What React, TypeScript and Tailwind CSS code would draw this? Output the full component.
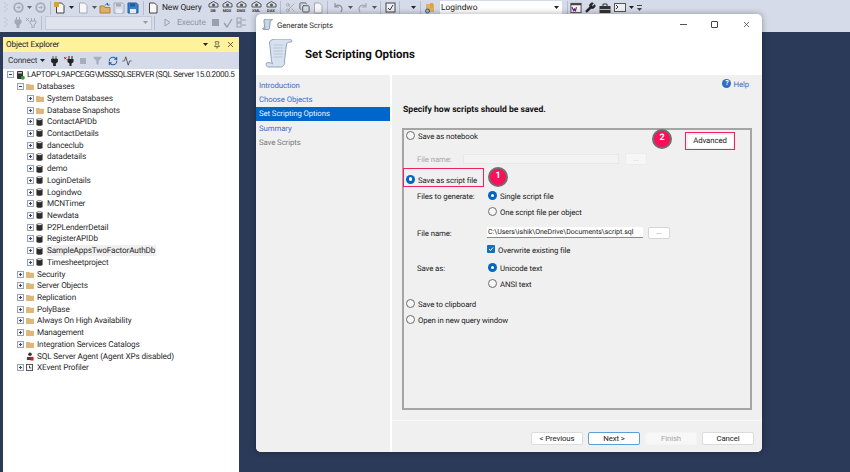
import type { ReactNode } from 'react'
import { Activity, Copy, Filter, Pin, RefreshCw, Scissors, Wrench, X } from 'lucide-react'

const FONT = "font-['Roboto',sans-serif] [text-rendering:geometricPrecision]"
const LABEL = 'text-[7.800px] tracking-[-0.1px]'

function Sep() {
  return <div className="mx-[2px] h-[14px] w-px shrink-0 bg-[#b4bccf]" />
}

function Grip() {
  return (
    <div className="flex h-[15px] w-[12px] shrink-0 items-center justify-center">
      <svg width="4" height="11" viewBox="0 0 4 11"><path d="M0.500 1h1M2.500 3h1M0.500 5h1M2.500 7h1M0.500 9h1" stroke="#aab1c2" strokeWidth="1.200" /></svg>
    </div>
  )
}

function Caret({ color = '#222' }: { color?: string }) {
  return (
    <svg width="5" height="3" viewBox="0 0 5 3" className="shrink-0">
      <path d="M0 0h5L2.500 3z" fill={color} />
    </svg>
  )
}

function Slot({ w, children }: { w: number; children?: ReactNode }) {
  return <div className="flex shrink-0 items-center justify-center" style={{ width: w }}>{children}</div>
}

function Circ({ color = '#a5abb8' }: { color?: string }) {
  return (
    <svg width="11" height="11" viewBox="0 0 11 11">
      <circle cx="5.500" cy="5.500" r="4.300" fill="none" stroke={color} strokeWidth="1.800" />
      <path d="M3.500 5.500h3.500M5.500 3.800 7.200 5.500 5.500 7.200" fill="none" stroke={color} strokeWidth="1" />
    </svg>
  )
}

function DocIcon({ color = '#444', accent }: { color?: string; accent?: string }) {
  return (
    <svg width="12" height="12" viewBox="0 0 12 12">
      <path d="M2.500 1h5l2.500 2.500V11h-7.500z" fill="#f7f7f7" stroke={color} />
      {accent && <rect x="0" y="0" width="5" height="5" fill={accent} />}
    </svg>
  )
}

function SaveIcon({ color = '#a3a9b5', fill = 'none' }: { color?: string; fill?: string }) {
  return (
    <svg width="12" height="12" viewBox="0 0 12 12">
      <path d="M1 1h8.500L11 2.500V11H1z" fill={fill} stroke={color} />
      <rect x="3" y="1.500" width="5" height="3" fill={color} />
      <rect x="3" y="7" width="6" height="4" fill="#e8ebf2" />
    </svg>
  )
}

function DbGear({ label }: { label: string }) {
  return (
    <div className="flex h-[13px] w-[13px] flex-col items-center">
      <svg width="11" height="7" viewBox="0 0 11 7" className="shrink-0">
        <path d="M1 6V3l4.500-2.500L10 3v3z" fill="none" stroke="#555" strokeWidth="1" />
        <circle cx="5.500" cy="4" r="1.500" fill="#555" />
      </svg>
      <span className="text-[4px] font-bold leading-[5px] text-[#333]">{label}</span>
    </div>
  )
}

function TopToolbar() {
  return (
    <div className={`h-[32px] shrink-0 bg-[#d6dbe9] ${FONT}`}>
      <div className="flex h-[15px] items-center">
        <Grip />
        <Slot w={12}><Circ /></Slot>
        <Slot w={10}><Caret color="#666" /></Slot>
        <Slot w={12}><Circ /></Slot>
        <Slot w={2} />
        <Sep />
        <Slot w={14}><DocIcon accent="#d9a13b" /></Slot>
        <Slot w={8}><Caret /></Slot>
        <Slot w={16}><DocIcon color="#a3a9b5" /></Slot>
        <Slot w={6}><Caret color="#555" /></Slot>
        <Slot w={16}>
          <svg width="12" height="12" viewBox="0 0 12 12">
            <path d="M1 4h4l1 1.500h5V11H1z" fill="#dcb067" stroke="#b3802d" />
            <path d="M6 3.500 8.500 1v2h2" fill="none" stroke="#1c5fa8" />
          </svg>
        </Slot>
        <Slot w={12}><SaveIcon /></Slot>
        <Slot w={16}><SaveIcon color="#1c5fa8" fill="#3f7fc4" /></Slot>
        <Sep />
        <Slot w={14}><DocIcon /></Slot>
        <span className="ml-[2px] w-[44px] shrink-0 whitespace-nowrap pt-[2px] text-[8.400px] leading-[9px] tracking-[-0.1px] text-[#222]">New Query</span>
        <Slot w={14}><DbGear label="DB" /></Slot>
        <Slot w={14}><DbGear label="MDX" /></Slot>
        <Slot w={14}><DbGear label="DMX" /></Slot>
        <Slot w={16}><DbGear label="XML" /></Slot>
        <Slot w={14}><DbGear label="DAX" /></Slot>
        <Sep />
        <Slot w={14}><Scissors size={11} color="#a3a9b5" /></Slot>
        <Slot w={14}><Copy size={11} color="#555" /></Slot>
        <Slot w={14}><DocIcon color="#a3a9b5" /></Slot>
        <Sep />
        <Slot w={16}>
          <svg width="11" height="11" viewBox="0 0 11 11"><path d="M2 1v4h4M2 5c2-3 7-2 7 2 0 1-.5 2-1 3" fill="none" stroke="#8a93a5" strokeWidth="1.200" /></svg>
        </Slot>
        <Slot w={8}><Caret color="#555" /></Slot>
        <Slot w={16}>
          <svg width="11" height="11" viewBox="0 0 11 11"><path d="M9 1v4H5M9 5C7 2 2 3 2 7c0 1 .5 2 1 3" fill="none" stroke="#a3a9b5" strokeWidth="1.200" /></svg>
        </Slot>
        <Slot w={8}><Caret color="#555" /></Slot>
        <Sep />
        <Slot w={14}>
          <svg width="11" height="11" viewBox="0 0 11 11"><rect x="1" y="1" width="9" height="9" fill="#eef0f5" stroke="#444" /><path d="M3 6l2 2 3-5" fill="none" stroke="#333" /></svg>
        </Slot>
        <Sep />
        <Slot w={6} />
        <Slot w={10}><Caret /></Slot>
        <Sep />
        <Slot w={14}>
          <svg width="12" height="12" viewBox="0 0 12 12"><path d="M2 2h8v8H2z" fill="#dcb067" /><rect x="6" y="1" width="3" height="5" fill="#e2a43a" /><circle cx="3.500" cy="9" r="2" fill="none" stroke="#1c5fa8" /></svg>
        </Slot>
        <Slot w={3} />
        <div className="flex h-[14px] w-[122px] shrink-0 items-center justify-between bg-white pl-[1px] pr-[3px]">
          <span className="pt-[2px] text-[8.400px] leading-[9px] text-[#222]">Logindwo</span>
          <Caret />
        </div>
        <Slot w={3} />
        <Sep />
        <Slot w={12}>
          <svg width="13" height="12" viewBox="0 0 13 12"><rect x="1" y="1" width="11" height="10" fill="#f7f7f7" stroke="#444" /><rect x="1" y="1" width="11" height="2" fill="#444" /><path d="M2 5l2 4 1-2 1 2 1-4" fill="none" stroke="#68217a" strokeWidth="1.200" /></svg>
        </Slot>
        <Slot w={17}><Wrench size={11} color="#222" fill="#222" /></Slot>
        <Slot w={12}>
          <svg width="12" height="10" viewBox="0 0 12 10"><path d="M4 3V1h4v2" fill="none" stroke="#333" /><rect x="0.500" y="3" width="11" height="7" fill="#333" /><rect x="0.500" y="6" width="11" height="0.800" fill="#d6dbe9" /></svg>
        </Slot>
        <Slot w={18}>
          <svg width="12" height="9" viewBox="0 0 12 9"><rect x="0.500" y="0.500" width="11" height="8" fill="#eef0f5" stroke="#555" /><path d="M2 2l2 2-2 2" fill="none" stroke="#333" /></svg>
        </Slot>
        <Slot w={5}><Caret /></Slot>
        <Slot w={10}>
          <svg width="5" height="7" viewBox="0 0 5 7"><rect width="5" height="1" y="1" fill="#444" /><path d="M0 4h5L2.500 7z" fill="#444" /></svg>
        </Slot>
      </div>
      <div className="flex h-[15px] items-center">
        <Grip />
        <Slot w={12}>
          <svg width="8" height="11" viewBox="0 0 8 11"><path d="M1 3h6v3L5 8v3H3V8L1 6zM2.500 0v3M5.500 0v3" fill="#a3a9b5" stroke="#a3a9b5" /></svg>
        </Slot>
        <Slot w={15}>
          <svg width="11" height="11" viewBox="0 0 11 11"><path d="M4 4h6v2L8 8v3H6V8L4 6zM5.500 1v3M8.500 1v3M0 1l3 3M3 1 0 4" fill="none" stroke="#a3a9b5" /></svg>
        </Slot>
        <Sep />
        <div className="ml-[1px] flex h-[14px] w-[107px] shrink-0 items-center justify-end border border-[#c3c9d8] bg-[#dfe3ee] pr-[3px]">
          <Caret color="#999" />
        </div>
        <Sep />
        <Slot w={20}>
          <svg width="7" height="9" viewBox="0 0 7 9"><path d="M1 1l5 3.500L1 8z" fill="none" stroke="#9aa0ab" /></svg>
        </Slot>
        <span className="w-[31px] shrink-0 pt-[2px] text-[8.400px] leading-[9px] tracking-[-0.1px] text-[#9097a5]">Execute</span>
        <Slot w={14}><div className="h-[7px] w-[7px] bg-[#9aa0ab]" /></Slot>
        <Slot w={12}>
          <svg width="10" height="10" viewBox="0 0 10 10"><path d="M1 5l3 4 5-8" fill="none" stroke="#9aa0ab" strokeWidth="1.400" /></svg>
        </Slot>
        <Slot w={14}>
          <svg width="11" height="11" viewBox="0 0 11 11"><rect x="1" y="1" width="4" height="4" fill="none" stroke="#9aa0ab" /><rect x="1" y="6" width="4" height="4" fill="none" stroke="#9aa0ab" /><path d="M6 3h4M6 8h4" stroke="#9aa0ab" /></svg>
        </Slot>
      </div>
    </div>
  )
}

function Expander({ open }: { open?: boolean }) {
  return (
    <div className="relative h-[7px] w-[7px] shrink-0 border border-[#9aa3b2] bg-[#f4f6f9]">
      <div className="absolute left-[1px] top-[2px] h-px w-[3px] bg-[#3a4a66]" />
      {!open && <div className="absolute left-[2px] top-[1px] h-[3px] w-px bg-[#3a4a66]" />}
    </div>
  )
}

function FolderIcon() {
  return (
    <svg width="8" height="7" viewBox="0 0 9 8" className="shrink-0">
      <path d="M0 1h3.500l1 1H9v6H0z" fill="#dcb67a" />
    </svg>
  )
}

function DbIcon() {
  return (
    <svg width="7" height="8" viewBox="0 0 8 9" className="shrink-0">
      <path d="M0.500 1.500C0.500 0 7.500 0 7.500 1.500V8C7.500 9.200 0.500 9.200 0.500 8z" fill="#2b2b2b" />
      <ellipse cx="4" cy="1.700" rx="2.800" ry="0.900" fill="#d9d9d9" />
    </svg>
  )
}

function ServerIcon() {
  return (
    <svg width="9" height="10" viewBox="0 0 9 10" className="shrink-0">
      <rect x="1" y="1" width="6" height="8" rx="1" fill="#333" />
      <rect x="2" y="2" width="4" height="1.500" fill="#ccc" />
      <circle cx="6.800" cy="7.800" r="2" fill="#2e9e44" />
    </svg>
  )
}

function AgentIcon() {
  return (
    <svg width="8" height="9" viewBox="0 0 9 10" className="shrink-0">
      <circle cx="4.500" cy="2.500" r="2" fill="#333" />
      <path d="M1 9V5.500h7V9z" fill="#444" />
      <rect x="5" y="5.500" width="3.500" height="4" fill="#d81e2c" />
    </svg>
  )
}

function ProfilerIcon() {
  return (
    <svg width="7" height="7" viewBox="0 0 8 8" className="shrink-0">
      <rect x="0.500" y="0.500" width="7" height="7" fill="#f5f5f5" stroke="#444" />
      <path d="M4 2v2.500h2" fill="none" stroke="#333" />
    </svg>
  )
}

type TreeKind = 'server' | 'folder' | 'db' | 'agent' | 'profiler'

type TreeItem = { label: string; level: number; kind: TreeKind; open?: boolean; noExpander?: boolean; selected?: boolean }

const dbNames = ['ContactAPIDb', 'ContactDetails', 'danceclub', 'datadetails', 'demo', 'LoginDetails', 'Logindwo', 'MCNTimer', 'Newdata', 'P2PLenderrDetail', 'RegisterAPIDb']

const TREE: TreeItem[] = [
  { label: 'LAPTOP-L9APCEGG\\MSSSQLSERVER (SQL Server 15.0.2000.5', level: 0, kind: 'server', open: true },
  { label: 'Databases', level: 1, kind: 'folder', open: true },
  { label: 'System Databases', level: 2, kind: 'folder' },
  { label: 'Database Snapshots', level: 2, kind: 'folder' },
  ...dbNames.map(label => ({ label, level: 2, kind: 'db' as TreeKind })),
  { label: 'SampleAppsTwoFactorAuthDb', level: 2, kind: 'db', selected: true },
  { label: 'Timesheetproject', level: 2, kind: 'db' },
  { label: 'Security', level: 1, kind: 'folder' },
  { label: 'Server Objects', level: 1, kind: 'folder' },
  { label: 'Replication', level: 1, kind: 'folder' },
  { label: 'PolyBase', level: 1, kind: 'folder' },
  { label: 'Always On High Availability', level: 1, kind: 'folder' },
  { label: 'Management', level: 1, kind: 'folder' },
  { label: 'Integration Services Catalogs', level: 1, kind: 'folder' },
  { label: 'SQL Server Agent (Agent XPs disabled)', level: 1, kind: 'agent', noExpander: true },
  { label: 'XEvent Profiler', level: 1, kind: 'profiler' },
]

function TreeRow({ item }: { item: TreeItem }) {
  const icon = item.kind === 'server' ? <ServerIcon /> : item.kind === 'folder' ? <FolderIcon /> : item.kind === 'db' ? <DbIcon /> : item.kind === 'agent' ? <AgentIcon /> : <ProfilerIcon />
  const tracking = item.level === 0 ? 'tracking-[-0.4px]' : 'tracking-[-0.14px]'
  return (
    <div className="flex h-[11.720px] items-center whitespace-nowrap" style={{ paddingLeft: 4 + item.level * 10 }}>
      <div className="flex w-[9px] shrink-0 items-center">{!item.noExpander && <Expander open={item.open} />}</div>
      <div className="flex w-[10px] shrink-0 items-center justify-start">{icon}</div>
      <span className={`px-[1px] pt-[2px] text-[8.200px] leading-[9px] text-[#2a2a2a] ${tracking} ${item.selected ? 'bg-[#f0f0f0]' : ''}`}>{item.label}</span>
    </div>
  )
}

function ObjectExplorer() {
  return (
    <div className={`ml-[3px] mt-[5px] flex h-[435px] w-[236px] flex-col overflow-hidden bg-white ${FONT}`}>
      <div className="flex h-[15px] shrink-0 items-center justify-between bg-[#fff29d] pl-[3px] pr-[4px]">
        <span className="pt-[2px] text-[8.200px] leading-[9px] tracking-[-0.14px] text-[#222]">Object Explorer</span>
        <div className="flex items-center gap-[5px]">
          <Caret />
          <Pin size={8} color="#333" />
          <X size={9} color="#333" />
        </div>
      </div>
      <div className="flex h-[17px] shrink-0 items-center bg-[#d6dbe9] pl-[5px]">
        <span className="w-[31px] pt-[2px] text-[8.200px] leading-[9px] tracking-[-0.14px] text-[#333]">Connect</span>
        <Slot w={7}><Caret /></Slot>
        <Slot w={16}>
          <svg width="7" height="10" viewBox="0 0 7 10"><path d="M0.500 3h6v3L4.500 7.500V10h-2V7.500L0.500 6zM2 0v3M5 0v3" fill="#222" stroke="#222" strokeWidth="0.700" /></svg>
        </Slot>
        <Slot w={14}>
          <svg width="10" height="10" viewBox="0 0 10 10"><path d="M3.500 3h6v3L7.500 7.500V10h-2V7.500L3.500 6z" fill="#222" /><path d="M5 0v3M8 0v3" stroke="#222" /><path d="M0 1l2.500 2.500M2.500 1 0 3.500" stroke="#d81e2c" /></svg>
        </Slot>
        <Slot w={14}><div className="h-[6px] w-[6px] bg-[#a8aebb]" /></Slot>
        <Slot w={15}><Filter size={9} color="#a8aebb" fill="#a8aebb" /></Slot>
        <Slot w={15}><RefreshCw size={10} color="#1c5fa8" strokeWidth={2.500} /></Slot>
        <Slot w={13}><Activity size={10} color="#444" /></Slot>
      </div>
      <div className="flex flex-col">
        {TREE.map(item => <TreeRow key={item.label} item={item} />)}
      </div>
    </div>
  )
}

function Radio({ checked, disabled, label, className = '' }: { checked?: boolean; disabled?: boolean; label: string; className?: string }) {
  return (
    <div className={`flex items-center gap-[3px] ${className}`}>
      {checked ? (
        <div className="flex h-[9px] w-[9px] shrink-0 items-center justify-center rounded-full bg-[#0067c0]">
          <div className="h-[3.500px] w-[3.500px] rounded-full bg-white" />
        </div>
      ) : (
        <div className="h-[9px] w-[9px] shrink-0 rounded-full border border-[#6e6e6e] bg-[#f6f6f6]" />
      )}
      <span className={`pt-[2px] leading-[9px] ${LABEL} ${disabled ? 'text-[#a0a0a0]' : 'text-[#222]'}`}>{label}</span>
    </div>
  )
}

function Badge({ n, className }: { n: number; className: string }) {
  return (
    <div className={`absolute flex h-[20px] w-[20px] items-center justify-center rounded-full border-2 border-[#6f6f6f] bg-[#fb0f59] text-[9px] font-bold text-white ${className}`}>{n}</div>
  )
}

function FootButton({ label, primary, disabled }: { label: string; primary?: boolean; disabled?: boolean }) {
  const tone = primary ? 'border-[#5b9fd8] bg-white text-[#222]' : disabled ? 'border-[#f4f4f4] bg-[#f7f7f7] text-[#a8a8a8]' : 'border-[#dcdcdc] bg-white text-[#222]'
  return (
    <button type="button" className={`h-[13px] w-[52px] rounded-[2px] border leading-none ${LABEL} ${tone}`}>{label}</button>
  )
}

function BrowseButton({ disabled }: { disabled?: boolean }) {
  return <div className={`flex h-[12px] w-[22px] shrink-0 items-center justify-center rounded-[2px] border text-[7px] leading-none ${disabled ? 'border-[#ececec] bg-[#f6f6f6] text-[#bbb]' : 'border-[#d6d6d6] bg-white text-[#555]'}`}>...</div>
}

function OptionsBox() {
  return (
    <div className="relative mx-[10px] mt-[12px] h-[282px] w-[350px] border-2 border-[#a5a5a5] pl-[2px]">
      <Radio label="Save as notebook" className="h-[11px]" />
      <div className="mt-[12px] flex h-[12px] items-center">
        <span className={`ml-[11px] w-[46px] whitespace-nowrap pt-[1px] leading-[9px] text-[#a8a8a8] ${LABEL}`}>File name:</span>
        <div className="h-[10px] w-[156px] border border-[#e8e8e8] bg-[#f3f3f3]" />
        <div className="ml-[6px]"><BrowseButton disabled /></div>
      </div>
      <Radio checked label="Save as script file" className="mt-[8px] h-[12px]" />
      <div className={`mt-[5px] grid grid-cols-[82px_1fr] leading-[11px] text-[#222] ${LABEL}`}>
        <span className="pl-[11px] pt-[1px]">Files to generate:</span>
        <div className="flex flex-col gap-[5px]">
          <Radio checked label="Single script file" />
          <Radio label="One script file per object" />
        </div>
      </div>
      <div className="mt-[9px] flex h-[13px] items-center">
        <span className={`w-[81px] pl-[11px] pt-[2px] leading-[9px] text-[#222] ${LABEL}`}>File name:</span>
        <div className="flex h-[11px] w-[156px] items-center whitespace-nowrap border-b border-[#8a8a8a] bg-white pl-[1px] text-[7px] leading-none text-[#222]">C:\Users\ishik\OneDrive\Documents\script.sql</div>
        <div className="ml-[5px]"><BrowseButton /></div>
      </div>
      <div className="ml-[81px] mt-[4px] flex h-[12px] items-center gap-[3px]">
        <div className="flex h-[8px] w-[8px] items-center justify-center rounded-[1px] bg-[#1a6fb5]">
          <svg width="6" height="6" viewBox="0 0 6 6"><path d="M1 3l1.500 1.500L5 1.500" fill="none" stroke="#fff" /></svg>
        </div>
        <span className={`pt-[2px] leading-[9px] text-[#222] ${LABEL}`}>Overwrite existing file</span>
      </div>
      <div className={`mt-[7px] grid grid-cols-[82px_1fr] leading-[11px] text-[#222] ${LABEL}`}>
        <span className="pl-[11px] pt-[1px]">Save as:</span>
        <div className="flex flex-col gap-[5px]">
          <Radio checked label="Unicode text" />
          <Radio label="ANSI text" />
        </div>
      </div>
      <Radio label="Save to clipboard" className="mt-[9px] h-[11px]" />
      <Radio label="Open in new query window" className="mt-[5px] h-[11px]" />
      <div className="absolute left-[-1px] top-[38px] h-[19px] w-[81px] border-[1.500px] border-[#f0215f]" />
      <Badge n={1} className="left-[84px] top-[37px]" />
      <Badge n={2} className="left-[248px] top-[-1px]" />
      <div className="absolute left-[281px] top-[2px] flex h-[18px] w-[50px] items-center justify-center border-[1.500px] border-[#f0215f] bg-[#f0f0f0]">
        <div className={`flex h-[13px] w-[45px] items-center justify-center rounded-[2px] bg-white leading-none text-[#222] ${LABEL}`}>Advanced</div>
      </div>
    </div>
  )
}

function Wizard() {
  return (
    <div className={`absolute left-[256px] top-[14px] flex h-[438px] w-[506px] flex-col overflow-hidden rounded-[5px] bg-white shadow-[0_0_6px_rgba(0,0,0,0.35)] ${FONT}`}>
      <div className="flex h-[18px] shrink-0 items-center justify-between pl-[6px] pr-[11px] pt-[2px]">
        <div className="flex items-center gap-[4px]">
          <svg width="11" height="11" viewBox="0 0 27 29"><path d="M4 3C5 1 8 0 10 0h14c2 0 3 2 2 3-2 0-4 0-5 2l-2 17c1 4-2 6-4 6H3c-2 0-3-2-2-4 2-1 5 0 6 1l-1-3z" fill="#c9d6e6" stroke="#6b7f99" strokeWidth="2" /></svg>
          <span className={`pt-[2px] leading-[9px] text-[#333] ${LABEL}`}>Generate Scripts</span>
        </div>
        <div className="flex items-center gap-[24px]">
          <div className="h-px w-[7px] bg-[#555]" />
          <div className="h-[7px] w-[7px] rounded-[1px] border border-[#444]" />
          <X size={9} color="#444" />
        </div>
      </div>
      <div className="flex h-[43px] shrink-0 items-center pl-[9px]">
        <svg width="28" height="29" viewBox="0 0 27 29" className="shrink-0">
          <path d="M4 3C5 1 8 0 10 0h14c2 0 3 2 2 3-2 0-4 0-5 2l-2 17c1 4-2 6-4 6H3c-2 0-3-2-2-4 2-1 5 0 6 1l-1-3z" fill="#d8e2ef" stroke="#8799b3" strokeWidth="0.900" />
          <path d="M8 6h10M8 9h10M8 12h9.500M8 15h9M8 18h9" stroke="#aebdd1" strokeWidth="0.800" />
        </svg>
        <span className="ml-[12px] pt-[3px] text-[11.500px] font-bold leading-none text-[#111]">Set Scripting Options</span>
      </div>
      <div className="flex min-h-0 flex-1">
        <div className={`flex w-[134px] shrink-0 flex-col bg-[#f0f0f0] pt-[3px] leading-none ${LABEL}`}>
          <div className="flex h-[14.500px] items-center pl-[3px] pt-[1px] text-[#3f6fc4]">Introduction</div>
          <div className="flex h-[14.500px] items-center pl-[3px] pt-[1px] text-[#3f6fc4]">Choose Objects</div>
          <div className="flex h-[13.500px] items-center bg-[#0066cc] pl-[3px] pt-[1px] text-[#e8f0fa]">Set Scripting Options</div>
          <div className="flex h-[15px] items-center pl-[3px] pt-[1px] text-[#3f6fc4]">Summary</div>
          <div className="flex h-[14.500px] items-center pl-[3px] pt-[1px] text-[#7a7a7a]">Save Scripts</div>
        </div>
        <div className="ml-[2px] flex min-w-0 flex-1 flex-col bg-[#f0f0f0]">
          <div className="flex h-[16px] shrink-0 items-center justify-end gap-[2px] pr-[13px] pt-[1px]">
            <div className="flex h-[9px] w-[9px] items-center justify-center rounded-full bg-[#2f6fc0] text-[7px] font-bold leading-none text-white">?</div>
            <span className={`pt-[1px] leading-[9px] text-[#3f6fc4] ${LABEL}`}>Help</span>
          </div>
          <div className="ml-[11px] mt-[13px] h-[12px] text-[8.600px] font-bold leading-[12px] text-[#111]">Specify how scripts should be saved.</div>
          <OptionsBox />
          <div className="mt-[10px] flex flex-1 items-start justify-end gap-[5px] border-t border-[#f8f8f8] pr-[8px] pt-[11px]">
            <FootButton label="< Previous" />
            <FootButton label="Next >" primary />
            <FootButton label="Finish" disabled />
            <FootButton label="Cancel" />
          </div>
        </div>
      </div>
    </div>
  )
}

export default function App() {
  return (
    <div className="relative flex h-[472px] w-[850px] flex-col overflow-hidden bg-[#2a3a58]">
      <TopToolbar />
      <ObjectExplorer />
      <Wizard />
    </div>
  )
}
